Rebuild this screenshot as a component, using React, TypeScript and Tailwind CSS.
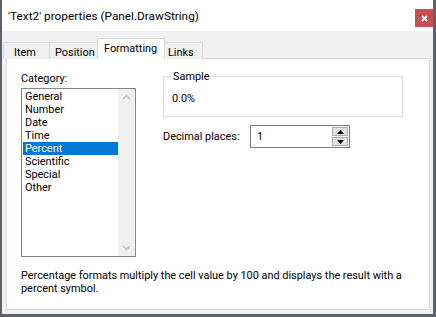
import React from "react";

const CATEGORIES = [
  "General",
  "Number",
  "Date",
  "Time",
  "Percent",
  "Scientific",
  "Special",
  "Other",
];

function ScrollBar() {
  return (
    <div className="w-[17px] bg-[#f0f0f0] flex flex-col justify-between items-center py-[5px]">
      <svg width="9" height="6" viewBox="0 0 9 6">
        <path d="M1 5 L4.5 1.5 L8 5" fill="none" stroke="#c2c2c2" strokeWidth="1.6" />
      </svg>
      <svg width="9" height="6" viewBox="0 0 9 6">
        <path d="M1 1 L4.5 4.5 L8 1" fill="none" stroke="#c2c2c2" strokeWidth="1.6" />
      </svg>
    </div>
  );
}

function SpinBox({ value }: { value: string }) {
  return (
    <div className="w-[100px] h-[23px] border border-[#7a7a7a] bg-white flex">
      <div className="flex-1 pl-[6px] flex items-center leading-[13px]">{value}</div>
      <div className="w-[17px] flex flex-col gap-px py-px pr-px">
        <div className="flex-1 bg-[#e1e1e1] border border-[#adadad] flex items-center justify-center">
          <svg width="7" height="4" viewBox="0 0 7 4">
            <path d="M0 4 L3.5 0 L7 4 Z" fill="#000" />
          </svg>
        </div>
        <div className="flex-1 bg-[#e1e1e1] border border-[#adadad] flex items-center justify-center">
          <svg width="7" height="4" viewBox="0 0 7 4">
            <path d="M0 0 L3.5 4 L7 0 Z" fill="#000" />
          </svg>
        </div>
      </div>
    </div>
  );
}

export default function App() {
  const selected = "Percent";
  return (
    <div className="w-[436px] h-[317px] flex flex-col bg-[#f0f0f0] border-l-2 border-r-[3px] border-b-[3px] border-[#5d6268] font-['Roboto',sans-serif] text-[10.9px] text-black whitespace-nowrap">
      {/* Title bar */}
      <div className="h-[31px] bg-white flex justify-between">
        <div className="pl-[6px] pt-[9px] leading-[14px] text-[11.8px]">
          'Text2' properties (Panel.DrawString)
        </div>
        <div className="mt-[9px] w-[18px] h-[18px] bg-[#c75050] flex items-center justify-center">
          <svg width="7" height="7" viewBox="0 0 7 7">
            <path d="M1 1 L6 6 M6 1 L1 6" stroke="#fff" strokeWidth="1.8" />
          </svg>
        </div>
      </div>

      {/* Body */}
      <div className="flex-1 flex flex-col pl-[4px] pr-[3px] pb-[4px]">
        {/* Tabs */}
        <div className="flex items-end pt-[7px] ml-[-3px] relative z-10 -mb-px leading-[13px]">
          <div className="w-[47px] h-[17px] border-l border-t border-r border-[#d9d9d9] bg-[#f0f0f0] pl-[10px] pt-[3px]">
            Item
          </div>
          <div className="w-[47px] h-[17px] border-t border-[#d9d9d9] bg-[#f0f0f0] pl-[5px] pt-[3px]">
            Position
          </div>
          <div className="w-[68px] h-[21px] border-l border-t border-r border-[#d9d9d9] bg-white pl-[6px] pt-[3px]">
            Formatting
          </div>
          <div className="w-[38px] h-[17px] border-t border-r border-[#d9d9d9] bg-[#f0f0f0] pl-[3px] pt-[3px]">
            Links
          </div>
        </div>

        {/* Panel */}
        <div className="flex-1 bg-white border border-[#d9d9d9] px-[14px] leading-[13px]">
          <div className="flex gap-[27px]">
            {/* Category list */}
            <div className="w-[115px] pt-[13px]">
              <div>Category:</div>
              <div className="mt-[3px] h-[169px] border border-[#828790] flex">
                <div className="flex-1 pt-px pl-px">
                  {CATEGORIES.map((c) => (
                    <div
                      key={c}
                      className={
                        c === selected
                          ? "h-[13px] pl-[2px] bg-[#0078d7] text-white"
                          : "h-[13px] pl-[2px]"
                      }
                    >
                      {c}
                    </div>
                  ))}
                </div>
                <ScrollBar />
              </div>
            </div>

            {/* Right side */}
            <div className="w-[240px] pt-[17px]">
              <div className="relative h-[41px] border border-[#dcdcdc] pl-[8px] pt-[15px]">
                <span className="absolute left-[8px] -top-[7px] bg-white px-px">Sample</span>
                <div>0.0%</div>
              </div>
              <div className="mt-[8px] flex items-center">
                <div className="w-[87px]">Decimal places:</div>
                <SpinBox value="1" />
              </div>
            </div>
          </div>

          <div className="mt-[12px]">
            Percentage formats multiply the cell value by 100 and displays the result with a
            <br />
            percent symbol.
          </div>
        </div>
      </div>
    </div>
  );
}
